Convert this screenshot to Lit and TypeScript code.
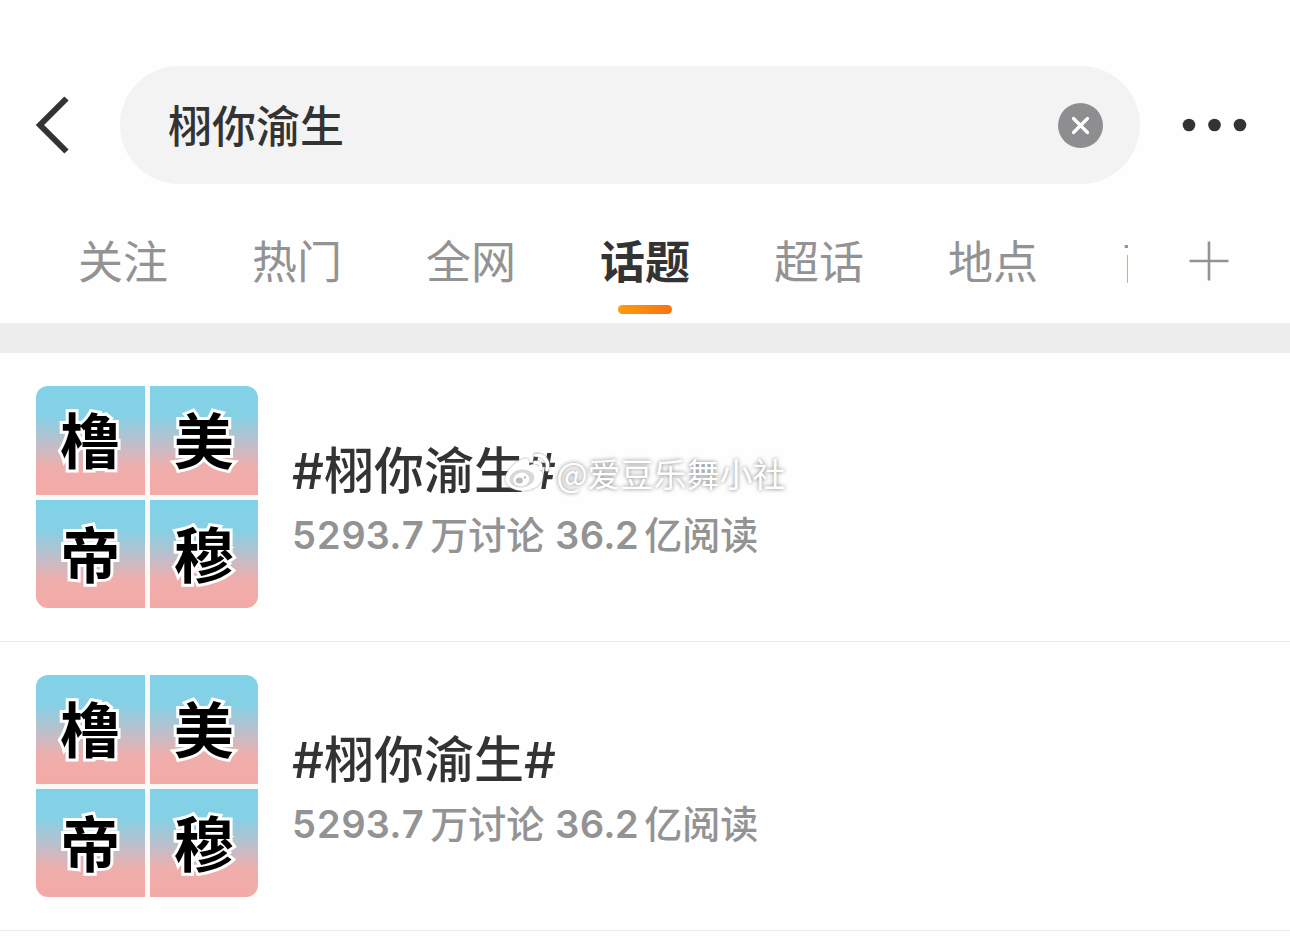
import { LitElement, html, css, svg } from "lit";
import { customElement, property, state } from "lit/decorators.js";
import { classMap } from "lit/directives/class-map.js";

interface Stat {
  value: string;
  unit: string;
}

interface Topic {
  title: string;
  stats: Stat[];
  cover: string[];
}

const TABS = ["关注", "热门", "全网", "话题", "超话", "地点", "商品"];

const STATS: Stat[] = [
  { value: "5293.7", unit: "万讨论" },
  { value: "36.2", unit: "亿阅读" },
];

const TOPICS: Topic[] = [
  { title: "#栩你渝生#", stats: STATS, cover: ["橹", "美", "帝", "穆"] },
  { title: "#栩你渝生#", stats: STATS, cover: ["橹", "美", "帝", "穆"] },
];

@customElement("topic-row")
export class TopicRow extends LitElement {
  @property({ attribute: false }) topic!: Topic;

  static styles = css`
    :host {
      display: block;
    }
    .row {
      display: flex;
      align-items: center;
      gap: 34px;
      padding: 33px 36px;
      border-bottom: 1px solid #ebebeb;
      color: inherit;
      text-decoration: none;
    }
    .cover {
      flex: none;
      display: grid;
      grid-template-columns: 1fr 1fr;
      grid-template-rows: 1fr 1fr;
      gap: 5px;
      width: 222px;
      height: 222px;
      border-radius: 12px;
      overflow: hidden;
      background: #fbf8f5;
    }
    .cell {
      display: flex;
      align-items: center;
      justify-content: center;
      padding-top: 4px;
      background: linear-gradient(#80d2e8 0%, #86d0e5 28%, #bdbfcb 52%, #efaeac 74%, #f4aaa6 100%);
      color: #000;
      font-size: 60px;
      line-height: 60px;
      font-weight: 700;
      -webkit-text-stroke: 6px #fff;
      paint-order: stroke fill;
      stroke-linejoin: round;
    }
    .info {
      min-width: 0;
      display: flex;
      flex-direction: column;
      gap: 4px;
      padding-top: 8px;
    }
    .title {
      margin: 0;
      font-size: 50px;
      line-height: 64px;
      font-weight: 500;
      color: #333;
    }
    .stats {
      display: flex;
      gap: 11px;
      margin: 0;
      font-size: 38px;
      line-height: 56px;
      font-weight: 500;
      color: #939393;
      white-space: nowrap;
    }
    .stat {
      display: flex;
      gap: 5px;
    }
    .value {
      font-variant-numeric: tabular-nums;
      font-weight: 600;
    }
  `;

  render() {
    return html`
      <a class="row" href="#topic">
        <span class="cover">${this.topic.cover.map((c) => html`<span class="cell">${c}</span>`)}</span>
        <span class="info">
          <h2 class="title">${this.topic.title}</h2>
          <p class="stats">
            ${this.topic.stats.map(
              (s) => html`<span class="stat"><span class="value">${s.value}</span><span>${s.unit}</span></span>`
            )}
          </p>
        </span>
      </a>
    `;
  }
}

@customElement("app-root")
export class AppRoot extends LitElement {
  @state() private active = 3;
  @state() private query = "栩你渝生";

  static styles = css`
    :host {
      display: block;
      position: relative;
      min-height: 100vh;
      overflow: hidden;
      background: #fefefe;
      color: #333;
      font-family: Inter, "Noto Sans CJK SC", sans-serif;
    }
    * {
      box-sizing: border-box;
    }
    button,
    input {
      margin: 0;
      padding: 0;
      border: 0;
      background: none;
      color: inherit;
      font: inherit;
      outline: none;
    }
    button {
      cursor: pointer;
    }
    svg {
      display: block;
    }
    .top {
      display: flex;
      align-items: center;
      padding: 66px 42px 0 34px;
    }
    .back {
      flex: none;
      margin-right: 50px;
    }
    .search {
      flex: 1;
      min-width: 0;
      display: flex;
      align-items: center;
      height: 118px;
      padding: 0 37px 0 48px;
      border-radius: 59px;
      background: #f3f3f3;
    }
    .field {
      flex: 1;
      min-width: 0;
      height: 64px;
      padding-bottom: 2px;
      font-size: 44px;
      font-weight: 500;
    }
    .more {
      flex: none;
      margin-left: 42px;
    }
    .nav {
      display: flex;
      align-items: center;
      padding: 0 60px 0 36px;
      border-bottom: 30px solid #ededed;
    }
    .tabs {
      flex: 1;
      min-width: 0;
      display: flex;
      overflow: hidden;
    }
    .tab {
      flex: none;
      display: flex;
      flex-direction: column;
      align-items: center;
      width: 174px;
      padding: 47px 0 9px;
      font-size: 44px;
      line-height: 64px;
      color: #939393;
    }
    .tab::after {
      content: "";
      width: 54px;
      height: 9px;
      margin-top: 10px;
      border-radius: 5px;
    }
    .tab.on {
      color: #333;
      font-weight: 700;
    }
    .tab.on::after {
      background: linear-gradient(90deg, #fb9d0e, #fb7110);
    }
    .tab {
      font-size: 45px;
    }
    .add {
      flex: none;
      margin: 14px 0 0 60px;
    }
    .mark {
      position: absolute;
      top: 473px;
      left: 50%;
      display: flex;
      align-items: center;
      gap: 4px;
      transform: translate(-50%, -50%);
      color: #fff;
      font-family: "Noto Sans CJK SC", sans-serif;
      font-size: 33px;
      line-height: 48px;
      white-space: nowrap;
      text-shadow: 0 0 4px #777;
      pointer-events: none;
    }
    .logo {
      filter: drop-shadow(0 0 1px #999);
    }
  `;

  render() {
    return html`
      <header class="top">
        <button class="back" aria-label="返回">
          <svg width="36" height="60" viewBox="0 0 36 60" fill="none" stroke="#333" stroke-width="6">
            <path d="M32.500 3.500 6 30 32.500 56.500" />
          </svg>
        </button>
        <div class="search">
          <input
            class="field"
            type="text"
            aria-label="搜索"
            .value=${this.query}
            @input=${(e: Event) => (this.query = (e.target as HTMLInputElement).value)}
          />
          <button aria-label="清除" @click=${() => (this.query = "")}>
            <svg width="45" height="45" viewBox="0 0 45 45">
              <circle cx="22.500" cy="22.500" r="22.500" fill="#8e8e90" />
              <path d="M15.500 15.500 29.500 29.500M29.500 15.500 15.500 29.500" stroke="#fff" stroke-width="3.200" stroke-linecap="round" />
            </svg>
          </button>
        </div>
        <button class="more" aria-label="更多">
          <svg width="66" height="14" viewBox="0 0 66 14" fill="#333">
            ${[7, 32.5, 58].map((x) => svg`<circle cx=${x} cy="7" r="6.300" />`)}
          </svg>
        </button>
      </header>
      <nav class="nav">
        <div class="tabs" role="tablist">
          ${TABS.map(
            (t, i) => html`<button
              class=${classMap({ tab: true, on: i === this.active })}
              role="tab"
              aria-selected=${i === this.active}
              @click=${() => (this.active = i)}
            >${t}</button>`
          )}
        </div>
        <button class="add" aria-label="添加频道">
          <svg width="42" height="40" viewBox="0 0 42 40" stroke="#939393" stroke-width="2.600">
            <path d="M1.500 20h39M21 .5v39" />
          </svg>
        </button>
      </nav>
      <main>${TOPICS.map((t) => html`<topic-row .topic=${t}></topic-row>`)}</main>
      <div class="mark">
        <svg class="logo" width="48" height="42" viewBox="0 0 48 42">
          <path
            fill="#fff"
            d="M19 7c4-1.500 7 1 5.500 6.500 6-2.500 11.500-1.500 10 4.500 5 1.500 5.500 7 2 12-5 7-13 9.500-21 8.500C7 37.500 1 33 1 26.500 1 19 11 9.500 19 7Z"
          />
          <ellipse cx="17.500" cy="26.500" rx="12.500" ry="9" fill="#d8d8d8" transform="rotate(-8 17.500 26.500)" />
          <ellipse cx="17" cy="27.500" rx="8" ry="6.800" fill="#fff" transform="rotate(-15 17 27.500)" />
          <ellipse cx="15" cy="28.500" rx="3.600" ry="3" fill="#bdbdbd" />
          <circle cx="20.500" cy="25.500" r="1.300" fill="#bdbdbd" />
          <path
            fill="none"
            stroke="#fff"
            stroke-width="3.600"
            stroke-linecap="round"
            d="M31 3c9-.5 14 6.500 11.500 14.500M30.500 10.500c4-.5 6.500 2 5.500 6"
          />
        </svg>
        <span>@爱豆乐舞小社</span>
      </div>
    `;
  }
}
